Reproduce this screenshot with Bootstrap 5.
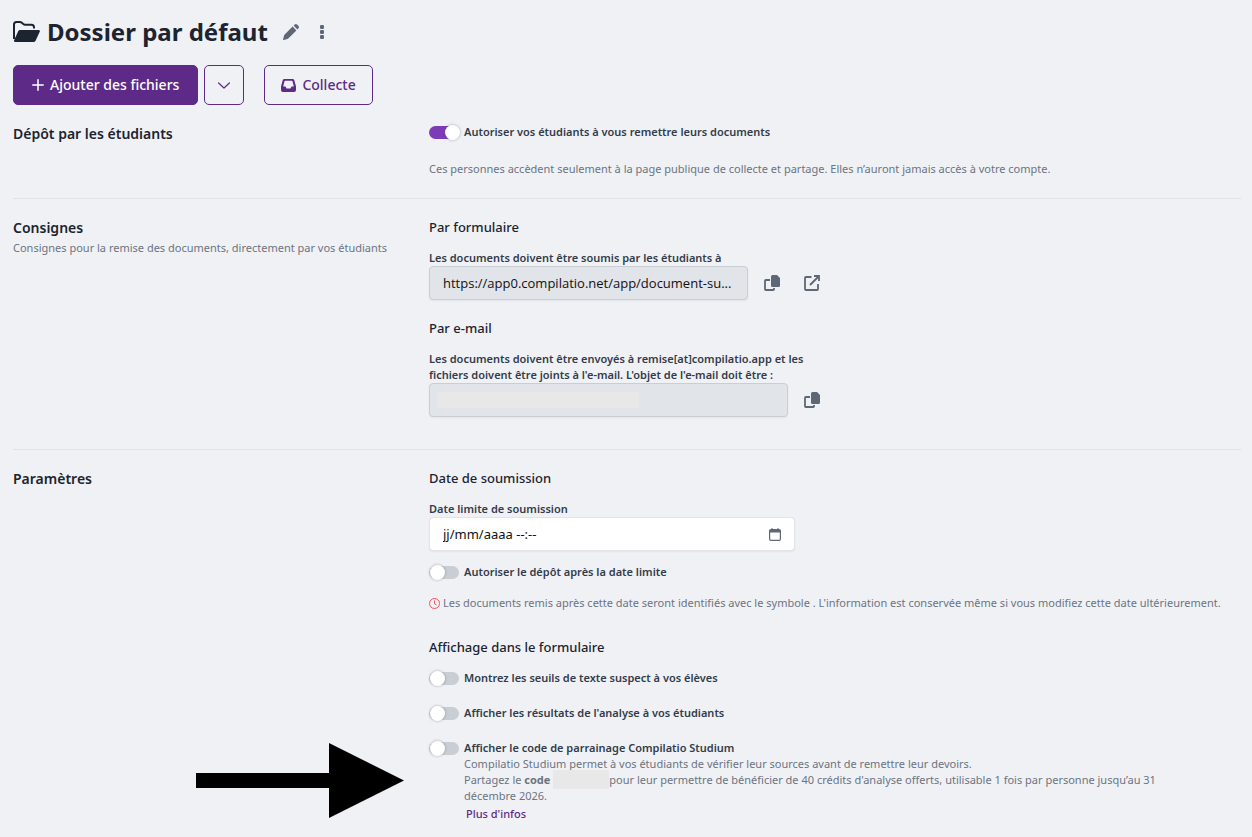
<!DOCTYPE html>
<html lang="fr">
<head>
<meta charset="utf-8">
<meta name="viewport" content="width=device-width, initial-scale=1">
<title>Dossier par défaut</title>
<link href="https://cdn.jsdelivr.net/npm/bootstrap@5.3.0/dist/css/bootstrap.min.css" rel="stylesheet">
<style>
  body { background: #f0f1f5; color: #1b2430; font-family: "Noto Sans", sans-serif; font-size: 11px; line-height: 16px; }
  .page { padding: 12px 11px 12px 13px; }
  .page-title { font-size: 24px; line-height: 40px; font-weight: 700; }
  .title-bar { gap: 7px; }
  .actions { margin: 13px 0 19px; }
  .section-title { font-size: 14px; line-height: 20px; font-weight: 600; }
  .section-title + p { margin-top: 2px; }
  .group-title { font-size: 13px; line-height: 18px; font-weight: 500; margin-bottom: 14px; }
  .soft { color: #6b7482; }
  .strong-label { font-weight: 600; color: #323c4a; }
  .settings-row { --bs-gutter-x: 20px; }
  .settings-section + .settings-section { border-top: 1px solid #dfe2e7; padding-top: 19px; }
  .section-deposit { padding-bottom: 21px; }
  .section-deposit p { margin-top: 21px; }
  .section-guides { padding-bottom: 13px; }
  .btn-main { display: flex; align-items: center; justify-content: center; gap: 6px; height: 40px; --bs-btn-font-size: 14px; --bs-btn-line-height: 22px; --bs-btn-padding-y: 8px; --bs-btn-padding-x: 16px; --bs-btn-border-radius: 5px; font-weight: 500; }
  .btn-purple { --bs-btn-padding-x: 18px; --bs-btn-bg: #5e2a88; --bs-btn-color: #fff; --bs-btn-border-color: #5e2a88; --bs-btn-hover-bg: #4d2270; --bs-btn-hover-color: #fff; }
  .btn-line { --bs-btn-color: #5e2a88; --bs-btn-border-color: #5e2a88; --bs-btn-hover-bg: #e8e0f0; --bs-btn-hover-color: #5e2a88; }
  .btn-square { width: 40px; margin-left: 6px; --bs-btn-padding-x: 0; }
  .btn-collect { margin-left: 20px; }
  .btn-icon { display: flex; align-items: center; justify-content: center; width: 32px; height: 32px; padding: 0; color: #5d6776; border: 0; flex: none; }
  .field-block { max-width: 399px; margin-bottom: 19px; }
  .date-block { max-width: 366px; }
  .field { font-size: 13px; line-height: 20px; height: 34px; padding: 6px 13px; border: 1px solid #c9cdd4; border-radius: 4px; color: #111; box-shadow: 0 1px 2px rgba(0,0,0,.06); }
  .field[readonly] { background: #e1e4e9; text-overflow: ellipsis; font-family: "Open Sans", sans-serif; }
  .date-block .field { border-color: #e1e4e9; padding-right: 40px; }
  .date-block .field::placeholder { color: #111; opacity: 1; }
  .date-block .btn-icon { right: 4px; top: 1px; }
  .masked { background: #e8e8e8; }
  .masked-subject { left: 8px; top: 9px; width: 202px; height: 16px; }
  .masked-code { display: inline-block; width: 56px; height: 19px; margin: -2px 0; vertical-align: top; }
  .toggle { display: flex; align-items: center; gap: 5px; }
  .toggle input { appearance: none; width: 30px; height: 13px; margin: 0; border-radius: 7px; background: #c9cdd4; position: relative; flex: none; }
  .toggle input::before { content: ""; position: absolute; left: 1px; top: -1px; width: 15px; height: 15px; border-radius: 50%; background: #fff; box-shadow: 0 0 2px 1px rgba(60,70,90,.2); }
  .toggle input:checked { background: #7d3cb5; }
  .toggle input:checked::before { left: 16px; }
  .date-block + .toggle { margin-top: 13px; }
  .late-note { margin: 15px 0 27px; gap: 3px; }
  .toggle + .toggle { margin-top: 19px; }
  .toggle-text { padding-left: 35px; padding-right: 40px; }
  .more-link { color: #5e2a88; font-weight: 500; text-decoration: none; line-height: 20px; padding-left: 2px; }
  .pointer-arrow { margin: auto 5px 6px auto; }
</style>
</head>
<body>
<main class="page">
  <header>
    <div class="d-flex align-items-center title-bar">
      <svg width="27" height="22" viewBox="0 0 27 22" aria-hidden="true"><path d="M1 18V3.500Q1 1 3.500 1H7q1 0 1.800.700l1.500 1.400q.8.700 1.800.700h6.400q2.500 0 2.500 2.500V7.500" fill="none" stroke="#1b2430" stroke-width="2"/><path d="M7 9h18.500q2 0 1.200 1.800l-4 8.700q-.7 1.500-2.400 1.500H2.500q-2.200 0-1.300-2l4-8.800Q5.800 9 7 9z" fill="#1b2430"/></svg>
      <h1 class="page-title mb-0">Dossier par défaut</h1>
      <div class="d-flex">
        <button type="button" class="btn btn-icon" aria-label="Renommer"><svg width="16" height="16" viewBox="0 0 16 16" fill="currentColor"><path d="M9.600 2.600 13.400 6.400 5.500 14.300Q5 14.800 4.300 15L.8 15.900q-.8.200-.7-.7L1 11.700q.2-.7.700-1.200zM10.600 1.600l.9-.9q1.400-1.400 2.800 0l1 1q1.400 1.400 0 2.800l-.9.900z"/></svg></button>
        <button type="button" class="btn btn-icon" aria-label="Plus d'options"><svg width="16" height="16" viewBox="0 0 16 16" fill="currentColor"><rect x="5" y="1" width="4" height="4" rx="1.200"/><rect x="5" y="6" width="4" height="4" rx="1.200"/><rect x="5" y="11" width="4" height="4" rx="1.200"/></svg></button>
      </div>
    </div>
    <div class="d-flex actions">
      <button type="button" class="btn btn-main btn-purple"><svg width="12" height="12" viewBox="0 0 12 12" stroke="currentColor" stroke-width="1.500" stroke-linecap="round"><path d="M6 .8v10.400M.8 6h10.400"/></svg>Ajouter des fichiers</button>
      <button type="button" class="btn btn-main btn-line btn-square" aria-label="Autres ajouts"><svg width="12" height="12" viewBox="0 0 12 12" fill="none" stroke="currentColor" stroke-width="1.200" stroke-linecap="round" stroke-linejoin="round"><path d="M.6 4 6 9l5.400-5"/></svg></button>
      <button type="button" class="btn btn-main btn-line btn-collect"><svg width="15" height="13" viewBox="0 0 15 13" aria-hidden="true"><path fill="currentColor" fill-rule="evenodd" d="M3.500 0h8q1.400 0 1.800 1.300L15 7.500V11q0 2-2 2H2q-2 0-2-2V7.500L1.700 1.300Q2.100 0 3.500 0zM4 1.800q-.4 0-.5.400L2.200 7.500h2.300l1 2h4l1-2h2.300L11.500 2.200q-.1-.4-.5-.4z"/></svg>Collecte</button>
    </div>
  </header>

  <section class="settings-section section-deposit">
    <div class="row settings-row">
      <div class="col-4"><h2 class="section-title mb-0">Dépôt par les étudiants</h2></div>
      <div class="col-8">
        <label class="toggle strong-label"><input type="checkbox" role="switch" checked>Autoriser vos étudiants à vous remettre leurs documents</label>
        <p class="soft mb-0">Ces personnes accèdent seulement à la page publique de collecte et partage. Elles n’auront jamais accès à votre compte.</p>
      </div>
    </div>
  </section>

  <section class="settings-section section-guides">
    <div class="row settings-row">
      <div class="col-4">
        <h2 class="section-title mb-0">Consignes</h2>
        <p class="soft mb-0">Consignes pour la remise des documents, directement par vos étudiants</p>
      </div>
      <div class="col-8">
        <h3 class="group-title">Par formulaire</h3>
        <div class="field-block">
          <label class="strong-label d-block" for="url">Les documents doivent être soumis par les étudiants à</label>
          <div class="d-flex align-items-center gap-2">
            <input id="url" class="form-control field" type="text" readonly value="https://app0.compilatio.net/app/document-su...">
            <button type="button" class="btn btn-icon" aria-label="Copier l'adresse"><svg width="16" height="16" viewBox="0 0 16 16"><path d="M6 5H1.800Q1 5 1 5.800v8.400q0 .8.8.8h7.400q.8 0 .8-.8V13" fill="none" stroke="currentColor" stroke-width="1.800"/><path d="M8.500 0H13l3 3v7.500q0 1.500-1.500 1.500h-6Q7 12 7 10.500v-9Q7 0 8.500 0z" fill="currentColor"/></svg></button>
            <button type="button" class="btn btn-icon" aria-label="Ouvrir"><svg width="16" height="16" viewBox="0 0 16 16" fill="none" stroke="currentColor" stroke-width="1.800"><path d="M7.500 2H2Q1 2 1 3v11q0 1 1 1h11q1 0 1-1V9"/><path d="M6 10 14.500 1.500M10 1h5v5"/></svg></button>
          </div>
        </div>
        <h3 class="group-title">Par e-mail</h3>
        <div class="field-block">
          <label class="strong-label d-block" for="subject">Les documents doivent être envoyés à remise[at]compilatio.app et les fichiers doivent être joints à l'e-mail. L'objet de l'e-mail doit être :</label>
          <div class="d-flex align-items-center gap-2">
            <div class="position-relative flex-grow-1">
              <input id="subject" class="form-control field" type="text" readonly>
              <span class="masked masked-subject position-absolute"></span>
            </div>
            <button type="button" class="btn btn-icon" aria-label="Copier l'objet"><svg width="16" height="16" viewBox="0 0 16 16"><path d="M6 5H1.800Q1 5 1 5.800v8.400q0 .8.8.8h7.400q.8 0 .8-.8V13" fill="none" stroke="currentColor" stroke-width="1.800"/><path d="M8.500 0H13l3 3v7.500q0 1.500-1.500 1.500h-6Q7 12 7 10.500v-9Q7 0 8.500 0z" fill="currentColor"/></svg></button>
          </div>
        </div>
      </div>
    </div>
  </section>

  <section class="settings-section">
    <div class="row settings-row">
      <div class="col-4 d-flex flex-column">
        <h2 class="section-title mb-0">Paramètres</h2>
        <svg class="pointer-arrow" width="208" height="75" viewBox="0 0 208 75" aria-hidden="true"><path d="M0 30h133V0l75 37.500L133 75V45H0z"/></svg>
      </div>
      <div class="col-8">
        <h3 class="group-title">Date de soumission</h3>
        <div class="date-block">
          <label class="strong-label d-block" for="deadline">Date limite de soumission</label>
          <div class="position-relative">
            <input id="deadline" class="form-control field" type="text" placeholder="jj/mm/aaaa --:--">
            <button type="button" class="btn btn-icon position-absolute" aria-label="Choisir une date"><svg width="12" height="13" viewBox="0 0 12 13"><path d="M2 1.500h8Q11.400 1.500 11.400 3v8q0 1.400-1.400 1.400H2Q.6 12.400.6 11V3Q.6 1.500 2 1.500z" fill="none" stroke="currentColor" stroke-width="1.200"/><path d="M.6 2h10.800v2.500H.6zM2.500 0h1v2h-1zM8.500 0h1v2h-1z" fill="currentColor"/></svg></button>
          </div>
        </div>
        <label class="toggle strong-label"><input type="checkbox" role="switch">Autoriser le dépôt après la date limite</label>
        <p class="soft late-note d-flex align-items-center"><svg class="flex-shrink-0" width="11" height="11" viewBox="0 0 11 11" fill="none" stroke="#f4515c"><circle cx="5.500" cy="5.500" r="5"/><path d="M5.500 2.500v3.200l2 1.300"/></svg><span>Les documents remis après cette date seront identifiés avec le symbole . L'information est conservée même si vous modifiez cette date ultérieurement.</span></p>
        <h3 class="group-title">Affichage dans le formulaire</h3>
        <label class="toggle strong-label"><input type="checkbox" role="switch">Montrez les seuils de texte suspect à vos élèves</label>
        <label class="toggle strong-label"><input type="checkbox" role="switch">Afficher les résultats de l'analyse à vos étudiants</label>
        <label class="toggle strong-label"><input type="checkbox" role="switch">Afficher le code de parrainage Compilatio Studium</label>
        <div class="toggle-text soft">
          Compilatio Studium permet à vos étudiants de vérifier leur sources avant de remettre leur devoirs.<br>
          Partagez le <b>code</b> <span class="masked masked-code"></span>pour leur permettre de bénéficier de 40 crédits d'analyse offerts, utilisable 1 fois par personne jusqu’au 31 décembre 2026.
          <a class="more-link d-block" href="#">Plus d'infos</a>
        </div>
      </div>
    </div>
  </section>
</main>
<script src="https://cdn.jsdelivr.net/npm/bootstrap@5.3.0/dist/js/bootstrap.bundle.min.js"></script>
</body>
</html>
